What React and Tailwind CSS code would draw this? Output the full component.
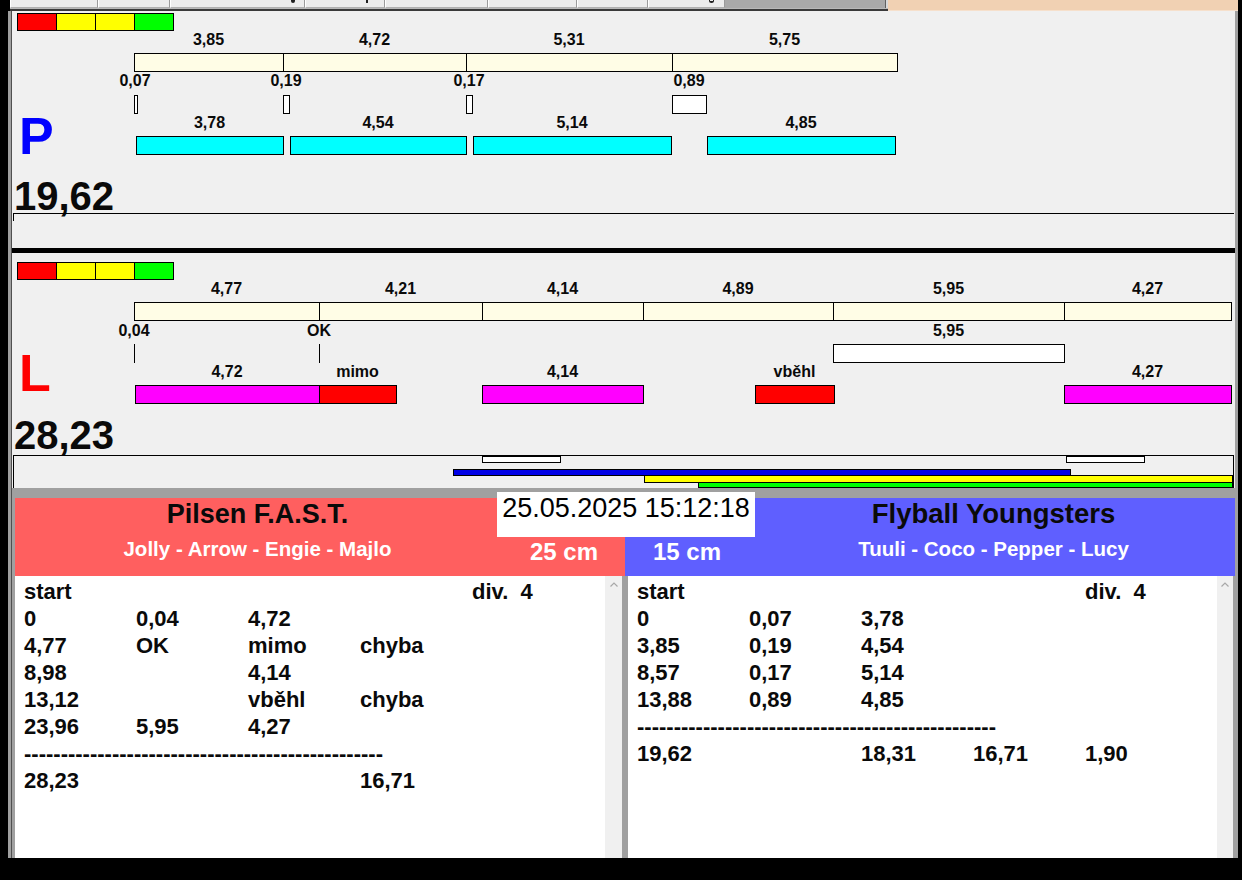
import React from "react";

const FONT = "font-['Liberation_Sans',Arial,sans-serif]";

// Timing-diagram pieces: positions are data (page coordinates), converted to section-relative
function Bar({ x1, x2, y, h, top, cls }) {
  return (
    <div
      className={"absolute box-border border border-black " + cls}
      style={{ left: x1 - 12, width: x2 - x1 + 1, top: y - top, height: h }}
    />
  );
}

function Lbl({ x, y, t, top }) {
  return (
    <div
      className="absolute w-[100px] text-center text-[16px] font-bold leading-[16px] text-[#0a0a0a] whitespace-nowrap"
      style={{ left: x - 12 - 50, top: y - top - 8 }}
    >
      {t}
    </div>
  );
}

function Tick({ x, y, h, top }) {
  return <div className="absolute w-px bg-black" style={{ left: x - 12, top: y - top, height: h }} />;
}

function Legend() {
  return (
    <div className="flex h-[18px]">
      <div className="w-[40px] h-full box-border border border-black bg-[#ff0000]" />
      <div className="w-[40px] h-full box-border border border-black bg-[#ffff00] -ml-px" />
      <div className="w-[40px] h-full box-border border border-black bg-[#ffff00] -ml-px" />
      <div className="w-[40px] h-full box-border border border-black bg-[#00ff00] -ml-px" />
    </div>
  );
}

const mid = (a, b) => (a + b) / 2;

function SectionP() {
  const T = 11;
  const cream = [
    [134, 283, "3,85"],
    [283, 466, "4,72"],
    [466, 672, "5,31"],
    [672, 897, "5,75"],
  ];
  const splits = [
    [134, 137, "0,07", 135],
    [283, 289, "0,19", 286],
    [466, 472, "0,17", 469],
    [672, 706, "0,89", 689],
  ];
  const runs = [
    [136, 283, "3,78"],
    [290, 466, "4,54"],
    [473, 671, "5,14"],
    [707, 895, "4,85"],
  ];
  return (
    <div className="relative h-[237px] bg-[#f0f0f0] flex flex-col">
      <div className="mt-[2px] ml-[5px]">
        <Legend />
      </div>
      <div className="mt-[79px] ml-[7px] h-[52px] text-[52px] leading-[52px] font-bold text-[#0000ff]">P</div>
      <div className="mt-[18px] ml-[2px] h-[32px] text-[40px] leading-[32px] font-bold text-[#0a0a0a]">19,62</div>
      <div className="mt-[1px] flex-1 mx-[1px] border-t border-black">
        <div className="w-px h-[7px] bg-black" />
      </div>

      {cream.map(([a, b, t]) => (
        <React.Fragment key={"c" + a}>
          <Bar x1={a} x2={b} y={53} h={19} top={T} cls="bg-[#fffde6]" />
          <Lbl x={mid(a, b)} y={40} t={t} top={T} />
        </React.Fragment>
      ))}
      {splits.map(([a, b, t, c]) => (
        <React.Fragment key={"s" + a}>
          <Bar x1={a} x2={b} y={95} h={19} top={T} cls="bg-white" />
          <Lbl x={c} y={81} t={t} top={T} />
        </React.Fragment>
      ))}
      {runs.map(([a, b, t]) => (
        <React.Fragment key={"r" + a}>
          <Bar x1={a} x2={b} y={136} h={19} top={T} cls="bg-[#00ffff]" />
          <Lbl x={mid(a, b)} y={123} t={t} top={T} />
        </React.Fragment>
      ))}
    </div>
  );
}

function SectionL() {
  const T = 253;
  const cream = [
    [134, 319, "4,77"],
    [319, 482, "4,21"],
    [482, 643, "4,14"],
    [643, 833, "4,89"],
    [833, 1064, "5,95"],
    [1064, 1231, "4,27"],
  ];
  const runs = [
    [135, 319, "bg-[#ff00ff]", "4,72"],
    [319, 396, "bg-[#ff0000]", "mimo"],
    [482, 643, "bg-[#ff00ff]", "4,14"],
    [755, 834, "bg-[#ff0000]", "vběhl"],
    [1064, 1231, "bg-[#ff00ff]", "4,27"],
  ];
  return (
    <div className="relative h-[235px] bg-[#f0f0f0] flex flex-col">
      <div className="mt-[9px] ml-[5px]">
        <Legend />
      </div>
      <div className="mt-[67px] ml-[7px] h-[52px] text-[52px] leading-[52px] font-bold text-[#ff0000]">L</div>
      <div className="mt-[20px] ml-[2px] h-[32px] text-[40px] leading-[32px] font-bold text-[#0a0a0a]">28,23</div>
      <div className="mt-[4px] flex-1 mx-[1px] border-t border-l border-r border-black" />

      {cream.map(([a, b, t]) => (
        <React.Fragment key={"c" + a}>
          <Bar x1={a} x2={b} y={302} h={19} top={T} cls="bg-[#fffde6]" />
          <Lbl x={mid(a, b)} y={289} t={t} top={T} />
        </React.Fragment>
      ))}
      <Lbl x={134} y={331} t="0,04" top={T} />
      <Lbl x={319} y={331} t="OK" top={T} />
      <Lbl x={948.5} y={331} t="5,95" top={T} />
      <Tick x={134} y={344} h={19} top={T} />
      <Tick x={319} y={344} h={19} top={T} />
      <Bar x1={833} x2={1064} y={344} h={19} top={T} cls="bg-white" />
      {runs.map(([a, b, c, t]) => (
        <React.Fragment key={"r" + a}>
          <Bar x1={a} x2={b} y={385} h={19} top={T} cls={c} />
          <Lbl x={mid(a, b)} y={372} t={t} top={T} />
        </React.Fragment>
      ))}
      <Bar x1={482} x2={560} y={456} h={7} top={T} cls="bg-white" />
      <Bar x1={1066} x2={1144} y={456} h={7} top={T} cls="bg-white" />
      <Bar x1={453} x2={1070} y={469} h={7} top={T} cls="bg-[#0000e6]" />
      <Bar x1={644} x2={1232} y={475} h={8} top={T} cls="bg-[#ffff00]" />
      <Bar x1={698} x2={1232} y={482} h={6} top={T} cls="bg-[#00ff00]" />
    </div>
  );
}

function Chevron() {
  return (
    <svg width="8" height="5" viewBox="0 0 8 5" className="mx-auto mt-[6px]">
      <polyline points="0.5,4.5 4,1 7.5,4.5" fill="none" stroke="#a8a8a8" strokeWidth="1.2" />
    </svg>
  );
}

function List({ rows }) {
  return (
    <div className="pt-[2px] pl-[9px] text-[22px] font-bold text-[#0a0a0a]">
      {rows.map((r, i) =>
        typeof r === "string" ? (
          <div key={i} className="h-[27px] leading-[27px] whitespace-pre">
            {r}
          </div>
        ) : (
          <div key={i} className="flex h-[27px] leading-[27px] whitespace-pre">
            {r.map((c, j) => (
              <div key={j} className="w-[112px] shrink-0">
                {c}
              </div>
            ))}
          </div>
        )
      )}
    </div>
  );
}

const DASH = "-".repeat(49);

const leftRows = [
  ["start", "", "", "", "div.  4"],
  ["0", "0,04", "4,72"],
  ["4,77", "OK", "mimo", "chyba"],
  ["8,98", "", "4,14"],
  ["13,12", "", "vběhl", "chyba"],
  ["23,96", "5,95", "4,27"],
  DASH,
  ["28,23", "", "", "16,71"],
];

const rightRows = [
  ["start", "", "", "", "div.  4"],
  ["0", "0,07", "3,78"],
  ["3,85", "0,19", "4,54"],
  ["8,57", "0,17", "5,14"],
  ["13,88", "0,89", "4,85"],
  DASH,
  ["19,62", "", "18,31", "16,71", "1,90"],
];

function Tab({ w, children }) {
  return (
    <div
      className="relative h-full overflow-hidden bg-[#ececec] border-l border-l-white border-r border-r-[#9a9a9a] border-b border-b-[#b0b0b0] box-border"
      style={{ width: w }}
    >
      {children}
    </div>
  );
}

function TopStrip() {
  return (
    <div className="flex h-[11px]">
      <div className="w-[10px] bg-black" />
      <div className="w-[878px] flex flex-col">
        <div className="flex h-[8px]">
          <Tab w={88} />
          <Tab w={72} />
          <Tab w={135}>
            <div className="absolute left-[120px] top-0 w-[4px] h-[3px] rounded-b-[2px] bg-[#202020]" />
          </Tab>
          <Tab w={80}>
            <div className="absolute left-[60px] top-0 w-[2px] h-[3px] bg-[#202020]" />
          </Tab>
          <Tab w={103} />
          <Tab w={89} />
          <Tab w={71} />
          <Tab w={77}>
            <div className="absolute left-[60px] top-0 w-[5px] h-[3px] rounded-b-[3px] border-b-2 border-x border-[#202020]" />
          </Tab>
          <div className="w-[160px] h-full bg-[#a9a9a9]" />
          <div className="w-[3px] h-full bg-[#d8d8d8] border-l border-l-[#606060]" />
        </div>
        <div className="h-px bg-[#b8b8b8]" />
        <div className="h-[2px] bg-[#3a3a3a]" />
      </div>
      <div className="w-[350px] bg-[#f1d1b3] border-b border-b-[#f6e0cc]" />
      <div className="flex-1 bg-black" />
    </div>
  );
}

export default function App() {
  return (
    <div className={"w-[1242px] h-[880px] bg-black flex flex-col overflow-hidden " + FONT}>
      <TopStrip />
      <div className="flex h-[847px]">
        <div className="w-[8px] bg-black" />
        <div className="w-[3px] bg-[#a0a0a0]" />
        <div className="w-px bg-[#505050]" />
        <div className="relative w-[1223px] flex flex-col">
          <SectionP />
          <div className="h-[5px] bg-black" />
          <SectionL />
          <div className="h-[10px] bg-[#a0a0a0]" />
          {/* headers */}
          <div className="flex h-[78px]">
            <div className="w-[3px] bg-[#a0a0a0]" />
            <div className="w-[610px] bg-[#ff5f5f] flex">
              <div className="w-[485px] flex flex-col items-center">
                <div className="h-[32px] text-[27px] leading-[32px] font-bold text-[#0a0a0a]">Pilsen F.A.S.T.</div>
                <div className="mt-[7px] h-[24px] text-[20.5px] leading-[24px] font-bold text-white">Jolly - Arrow - Engie - Majlo</div>
              </div>
              <div className="flex-1 flex flex-col items-end pr-[27px]">
                <div className="mt-[40px] h-[28px] text-[24px] leading-[28px] font-bold text-white">25 cm</div>
              </div>
            </div>
            <div className="flex-1 bg-[#5f5fff] flex">
              <div className="w-[127px] pl-[28px]">
                <div className="mt-[40px] h-[28px] text-[24px] leading-[28px] font-bold text-white">15 cm</div>
              </div>
              <div className="flex-1 flex flex-col items-center">
                <div className="h-[32px] text-[27.5px] leading-[32px] font-bold text-[#0a0a0a]">Flyball Youngsters</div>
                <div className="mt-[7px] h-[24px] text-[20.5px] leading-[24px] font-bold text-white">Tuuli - Coco - Pepper - Lucy</div>
              </div>
            </div>
          </div>
          {/* lists */}
          <div className="flex flex-1">
            <div className="w-[3px] bg-[#a0a0a0]" />
            <div className="w-[590px] bg-white">
              <List rows={leftRows} />
            </div>
            <div className="w-[17px] bg-[#f0f0f0]">
              <Chevron />
            </div>
            <div className="w-[6px] bg-[#a0a0a0]" />
            <div className="w-[589px] bg-white">
              <List rows={rightRows} />
            </div>
            <div className="w-[16px] bg-[#f0f0f0]">
              <Chevron />
            </div>
            <div className="flex-1 bg-[#a0a0a0]" />
          </div>
          {/* date overlay */}
          <div className="absolute left-[485px] top-[481px] w-[258px] h-[45px] bg-white text-center pt-[3px] text-[27px] leading-[27px] text-black">
            25.05.2025 15:12:18
          </div>
        </div>
        <div className="w-[3px] bg-[#a0a0a0]" />
        <div className="flex-1 bg-black" />
      </div>
      <div className="flex-1 bg-black" />
    </div>
  );
}
